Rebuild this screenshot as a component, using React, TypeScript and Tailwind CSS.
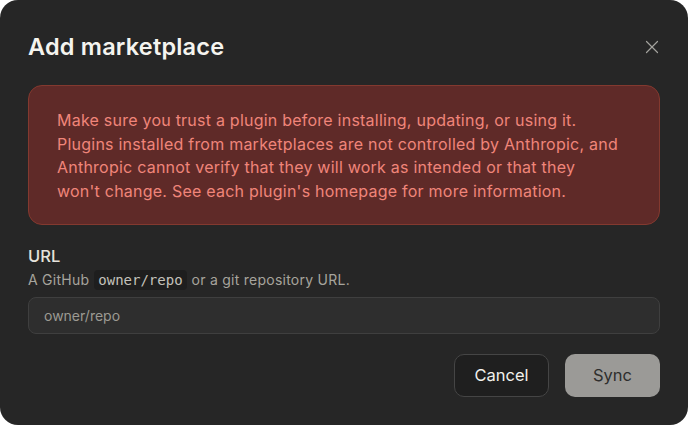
import { X } from 'lucide-react';

const SANS = { fontFamily: 'Inter, "Noto Sans", sans-serif' };

export default function App() {
  return (
    <div className="w-[688px] h-[425px] bg-white" style={SANS}>
      <div className="w-full h-full rounded-[18px] bg-[#262626] px-7 pt-[30px]">
        {/* Header */}
        <div className="flex items-center justify-between h-[34px]">
          <h2 className="text-[23.5px] font-semibold text-[#f5f4ef] tracking-[0.2px]">Add marketplace</h2>
          <button className="text-[#a3a29d] mr-[-3px]">
            <X size={22} strokeWidth={1.3} />
          </button>
        </div>

        {/* Warning */}
        <div className="mt-[21px] rounded-[14px] border border-[#83392f] bg-[#5f2a28] pl-[28px] pr-6 pt-[23px] pb-[21px]">
          <p className="text-[16px] leading-[23.5px] text-[#f0857a] tracking-[0.23px]">
            Make sure you trust a plugin before installing, updating, or using it.
            <br />
            Plugins installed from marketplaces are not controlled by Anthropic, and
            <br />
            Anthropic cannot verify that they will work as intended or that they
            <br />
            won't change. See each plugin's homepage for more information.
          </p>
        </div>

        {/* URL field */}
        <div className="mt-[21px]">
          <div className="text-[16.5px] font-medium text-[#e5e3dc] leading-5">URL</div>
          <div className="mt-[4px] flex items-center text-[14px] text-[#a6a49d] leading-5 tracking-[0.25px]">
            <span>A GitHub</span>
            <code
              className="mx-[5px] px-[4px] rounded-[4px] bg-[#1e1e1e] text-[14px] text-[#c4c2bb] tracking-normal"
              style={{ fontFamily: '"DejaVu Sans Mono", "Liberation Mono", monospace' }}
            >
              owner/repo
            </code>
            <span>or a git repository URL.</span>
          </div>
          <input
            className="mt-[7px] w-full h-[37px] rounded-[8px] border border-[#3f3f3f] bg-[#2e2e2e] px-[15px] text-[14px] text-[#e5e3dc] placeholder:text-[#9c9a93] outline-none"
            placeholder="owner/repo"
          />
        </div>

        {/* Actions */}
        <div className="mt-[20px] flex justify-end gap-4">
          <button className="w-[95px] h-[43px] rounded-[10px] border border-[#454545] bg-[#1f1f1f] text-[16.5px] text-[#f2f1ec]">
            Cancel
          </button>
          <button className="w-[95px] h-[43px] rounded-[10px] bg-[#9b9a97] text-[16.5px] text-[#2e2e2d]">
            Sync
          </button>
        </div>
      </div>
    </div>
  );
}
